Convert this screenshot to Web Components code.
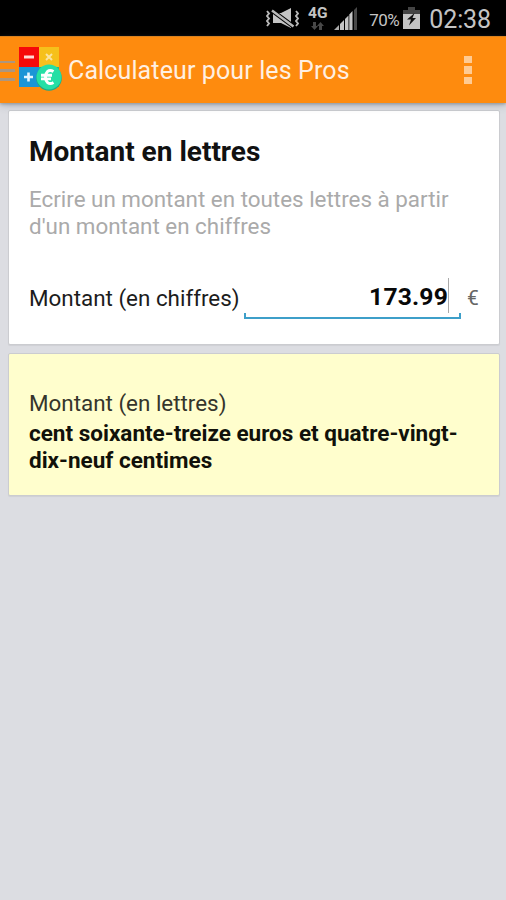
<!DOCTYPE html>
<html lang="fr">
<head>
<meta charset="utf-8">
<title>Calculateur pour les Pros</title>
<style>
html, body { margin: 0; height: 100%; }
body { font-family: Roboto, "Noto Sans", sans-serif; background: #dcdde2; overflow: hidden; }
</style>
</head>
<body>
<calc-app></calc-app>
<script>
const define = (name, html) => {
  const template = document.createElement('template');
  template.innerHTML = html;
  customElements.define(name, class extends HTMLElement {
    constructor() {
      super();
      this.attachShadow({ mode: 'open' }).append(template.content.cloneNode(true));
    }
  });
};

define('status-bar', `
<style>
:host { display: flex; box-sizing: border-box; height: 36px; background: #000; color: #c4c4c4; align-items: center; justify-content: flex-end; padding-right: 15px; line-height: 36px; white-space: nowrap; }
svg { display: block; flex: none; }
.net { display: flex; flex-direction: column; align-items: center; width: 21px; height: 28px; margin: 0 6px 0 8px; font-size: 15.500px; line-height: 18px; font-weight: 700; }
.pct { font-size: 17px; padding-top: 3px; margin-left: 11px; letter-spacing: -.55px; }
.time { font-size: 25px; padding-top: 3px; margin-left: 9px; letter-spacing: -.1px; }
</style>
<svg width="34" height="22" viewBox="0 0 34 22" fill="none" stroke="#b9b9b9" stroke-width="2">
  <path d="M2 4l2 2.5-2 2.5 2 2.500-2 2.500 2 2.500-2 2.500M31 4l2 2.500-2 2.500 2 2.500-2 2.500 2 2.500-2 2.500" stroke-width="1.900"/>
  <path d="M8 6H16L26 1v20l-10-5H8z" fill="#c4c4c4" stroke="none"/>
  <path d="M7 3.500l21.500 16" stroke="#000" stroke-width="4.600"/>
  <path d="M7 3.500l21.500 16" stroke-width="2.400"/>
</svg>
<div class="net"><span>4G</span>
  <svg width="13" height="8" viewBox="0 0 13 8" fill="#484848"><path d="M2 0h3v4h2L3.500 8 0 4h2zM8 8h3V4h2L9.500 0 6 4h2z"/></svg>
</div>
<svg width="24" height="24" viewBox="0 0 24 24">
  <path d="M0 24L5 19v5z" fill="#aaa"/><path d="M6 18l4-4v10H6z" fill="#c4c4c4"/><path d="M11 13l3.500-3.500V24H11z" fill="#c4c4c4"/><path d="M15.300 8.500L18.500 5v19h-3.200z" fill="#c4c4c4"/><path d="M20 4l3-3v23h-3z" fill="#484848"/>
</svg>
<span class="pct">70%</span>
<svg width="17" height="24" viewBox="0 0 17 24" style="margin-left:4px">
  <path d="M5 1h7v3h5v5H0V4h5z" fill="#444"/><path d="M0 8h17v15H0z" fill="#c4c4c4"/>
  <path d="M11.500 7L4 13.500h4l-2 6 7-7.500H9.500z" fill="#111"/>
</svg>
<span class="time">02:38</span>`);

define('app-logo', `
<style>:host { display: block; width: 44px; height: 44px; } svg { display: block; }</style>
<svg width="44" height="44" viewBox="0 0 44 44">
  <path d="M0 0h20v20H0z" fill="#f60909"/><path d="M20 0h20v20H20z" fill="#f6c01b"/>
  <path d="M0 20h20v20H0z" fill="#1b95d6"/><path d="M20 20h20v20H20z" fill="#1fb98e"/>
  <path d="M5 10h10" stroke="#ffd9d4" stroke-width="3"/>
  <path d="M27 7l6 6m0-6l-6 6" stroke="#fbe3a0" stroke-width="2"/>
  <path d="M5 30h9M9.500 25.500v9" stroke="#e5f6ff" stroke-width="2.600"/>
  <circle cx="30" cy="31" r="12.800" fill="#21aa86"/><circle cx="30" cy="30" r="12.500" fill="#25dfa5"/>
  <path d="M34.500 24.500C29.500 21.500 26.500 25.500 26.500 30s3 8.500 8 5.500M22 28.200H33M22 31.900H32" fill="none" stroke="#fff" stroke-width="2.900"/>
</svg>`);

define('action-bar', `
<style>
:host { display: flex; box-sizing: border-box; height: 67px; background: #fe8b0e; color: #fff0e2; position: relative; align-items: center; border-top: 1px solid #d9821f; box-shadow: 0 1px 3px rgba(70,80,90,.4), 0 2px 8px rgba(70,80,90,.3); }
.drawer { width: 15px; height: 20px; display: flex; flex-direction: column; justify-content: space-between; margin-right: 4px; padding-top: 1px; }
.drawer i { height: 2.500px; background: #ad967e; }
app-logo { margin-bottom: 2px; }
.title { font-size: 25px; line-height: 32px; margin-left: 5px; padding-top: 2px; white-space: nowrap; flex: 1; letter-spacing: .12px; }
.more { display: grid; gap: 3px; margin-right: 34px; }
.more i { width: 8px; height: 7.500px; background: #ffcb93; }
</style>
<div class="drawer"><i></i><i></i><i></i></div>
<app-logo></app-logo>
<span class="title"><slot></slot></span>
<div class="more"><i></i><i></i><i></i></div>`);

define('info-card', `
<style>
:host { display: block; box-sizing: border-box; background: var(--card, #fff); border: 1px solid #cbccd0; border-radius: 2px; padding: 25px 20px 0; box-shadow: 0 1px 1px rgba(0,0,0,.06); }
</style><slot></slot>`);

define('amount-field', `
<style>
:host { display: flex; height: 42px; color: #1c1c1c; font-size: 22.400px; line-height: 42px; white-space: nowrap; }
.label { width: 215px; flex: none; }
.input { box-sizing: border-box; width: 217px; flex: none; height: 42px; display: flex; flex-direction: column; justify-content: flex-end; }
.value { display: flex; justify-content: flex-end; align-items: center; height: 35px; padding-right: 12px; font-size: 24.700px; letter-spacing: .15px; line-height: 35px; font-weight: 700; color: #080808; }
.value ::slotted(span) { padding-top: 2px; }
.value i { width: 1px; height: 35px; background: #aaa; }
.line { box-sizing: border-box; height: 6px; border: 2px solid #3d9fc9; border-top: 0; }
.unit { margin-left: 6px; color: #666; font-size: 21px; }
</style>
<span class="label"><slot name="label"></slot></span>
<div class="input"><div class="value"><slot></slot><i></i></div><div class="line"></div></div>
<span class="unit"><slot name="unit"></slot></span>`);

define('calc-app', `
<style>
:host { display: block; height: 900px; background: #dcdde2; }
main { display: grid; gap: 8px; padding: 7px 7px 0 8px; }
.input { height: 235px; }
.result { --card: #fffecd; height: 143px; padding-top: 35px; }
h1, p { margin: 0; white-space: nowrap; }
h1 { font-size: 28px; line-height: 32px; color: #111; }
.desc { font-size: 22.400px; line-height: 26.500px; color: #aaa; margin-top: 18px; }
amount-field { margin-top: 38px; }
.lab { font-size: 22.400px; line-height: 28px; color: #35352b; }
.out { font-size: 22.500px; line-height: 26.500px; color: #11110a; font-weight: 700; margin-top: 3px; }
</style>
<status-bar></status-bar>
<action-bar>Calculateur pour les Pros</action-bar>
<main>
  <info-card class="input">
    <h1><span>Montant en lettres</span></h1>
    <p class="desc"><span>Ecrire un montant en toutes lettres à partir</span><br><span>d'un montant en chiffres</span></p>
    <amount-field><span slot="label">Montant (en chiffres)</span><span>173.99</span><span slot="unit">€</span></amount-field>
  </info-card>
  <info-card class="result">
    <p class="lab"><span>Montant (en lettres)</span></p>
    <p class="out"><span>cent soixante-treize euros et quatre-vingt-</span><br><span>dix-neuf centimes</span></p>
  </info-card>
</main>`);
</script>
</body>
</html>
